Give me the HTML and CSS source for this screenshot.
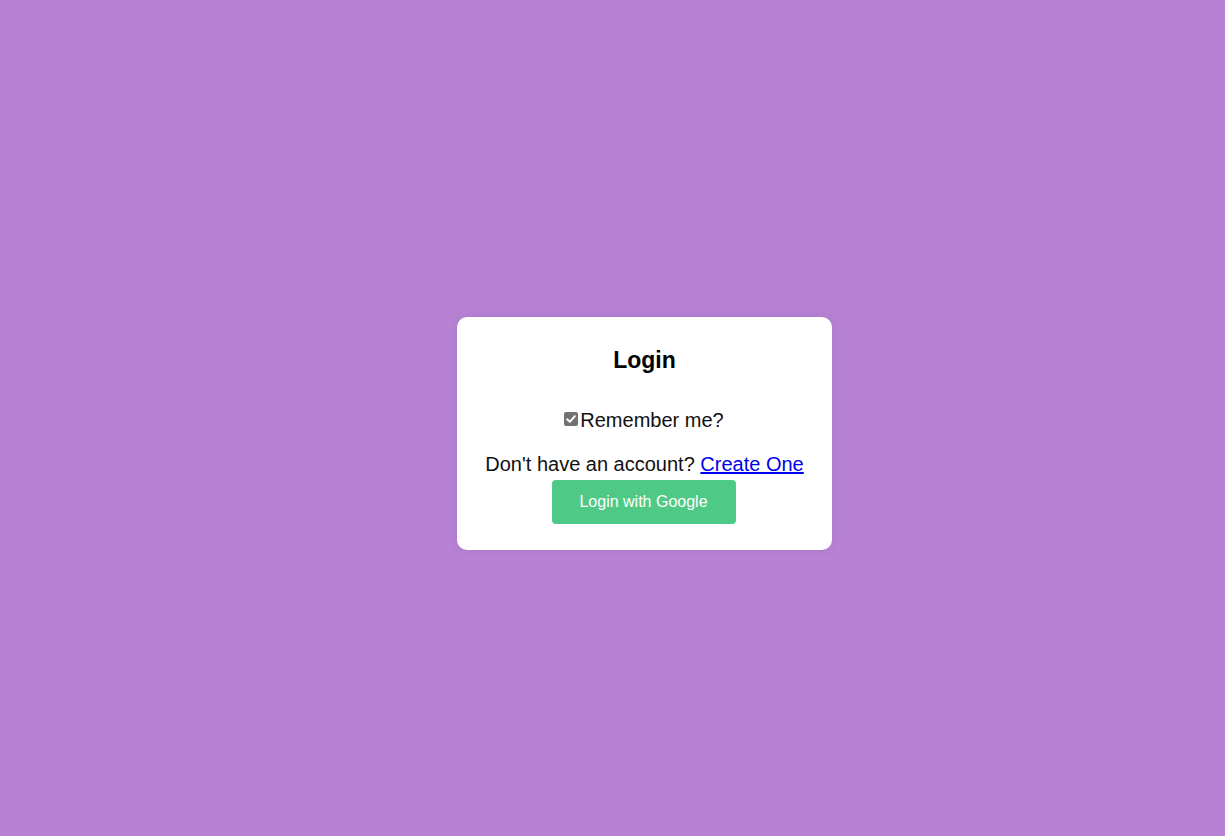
FILE: index.html
```html
<!DOCTYPE html>
<html lang="en">
<head>
<meta charset="utf-8">
<title>Login</title>
<link rel="stylesheet" href="styles.css">
</head>
<body>
<main class="page">
  <section class="card">
    <h3 class="title">Login</h3>
    <label class="remember">
      <span class="check" aria-hidden="true">
        <svg viewBox="0 0 14 14" width="14" height="14"><path d="M3.2 7.3 L5.8 9.8 L10.9 4.2" fill="none" stroke="#fff" stroke-width="2" stroke-linecap="round" stroke-linejoin="round"/></svg>
      </span>Remember me?
    </label>
    <p class="signup">Don't have an account? <a href="#" class="link">Create One</a></p>
    <button class="google" type="button">Login with Google</button>
  </section>
</main>
</body>
</html>
```

FILE: styles.css
```css
html, body {
  margin: 0;
  padding: 0;
}
body {
  background: #b782d4;
  font-family: "Liberation Sans", Arial, sans-serif;
  color: #111;
}
.page {
  box-sizing: border-box;
  min-height: 836px;
  padding: 31px 0 0 64px;
  display: flex;
  align-items: center;
  justify-content: center;
}
.card {
  box-sizing: border-box;
  width: 375px;
  height: 233px;
  background: #fff;
  border-radius: 10px;
  box-shadow: 0 0 10px rgba(0, 0, 0, 0.08);
  padding: 29px 0 26px;
  display: flex;
  flex-direction: column;
  align-items: center;
}
.title {
  margin: 0;
  font-size: 23px;
  line-height: 28px;
  font-weight: bold;
  color: #000;
}
.remember {
  margin-top: 35px;
  font-size: 20px;
  line-height: 23px;
  display: flex;
  align-items: center;
  margin-left: -1px;
}
.check {
  width: 14px;
  height: 14px;
  border-radius: 2px;
  background: #727272;
  display: inline-flex;
  margin-right: 2px;
  position: relative;
  top: -2px;
}
.check svg {
  display: block;
}
.signup {
  margin: 21px 0 0;
  font-size: 20px;
  line-height: 23px;
}
.link {
  color: #0000ee;
  text-decoration: underline;
}
.google {
  margin-top: 4px;
  margin-right: 2px;
  width: 184px;
  height: 44px;
  border: none;
  border-radius: 4px;
  background: #4fc986;
  color: #fff;
  font-family: "Liberation Sans", Arial, sans-serif;
  font-size: 16px;
  padding: 0;
}
```
